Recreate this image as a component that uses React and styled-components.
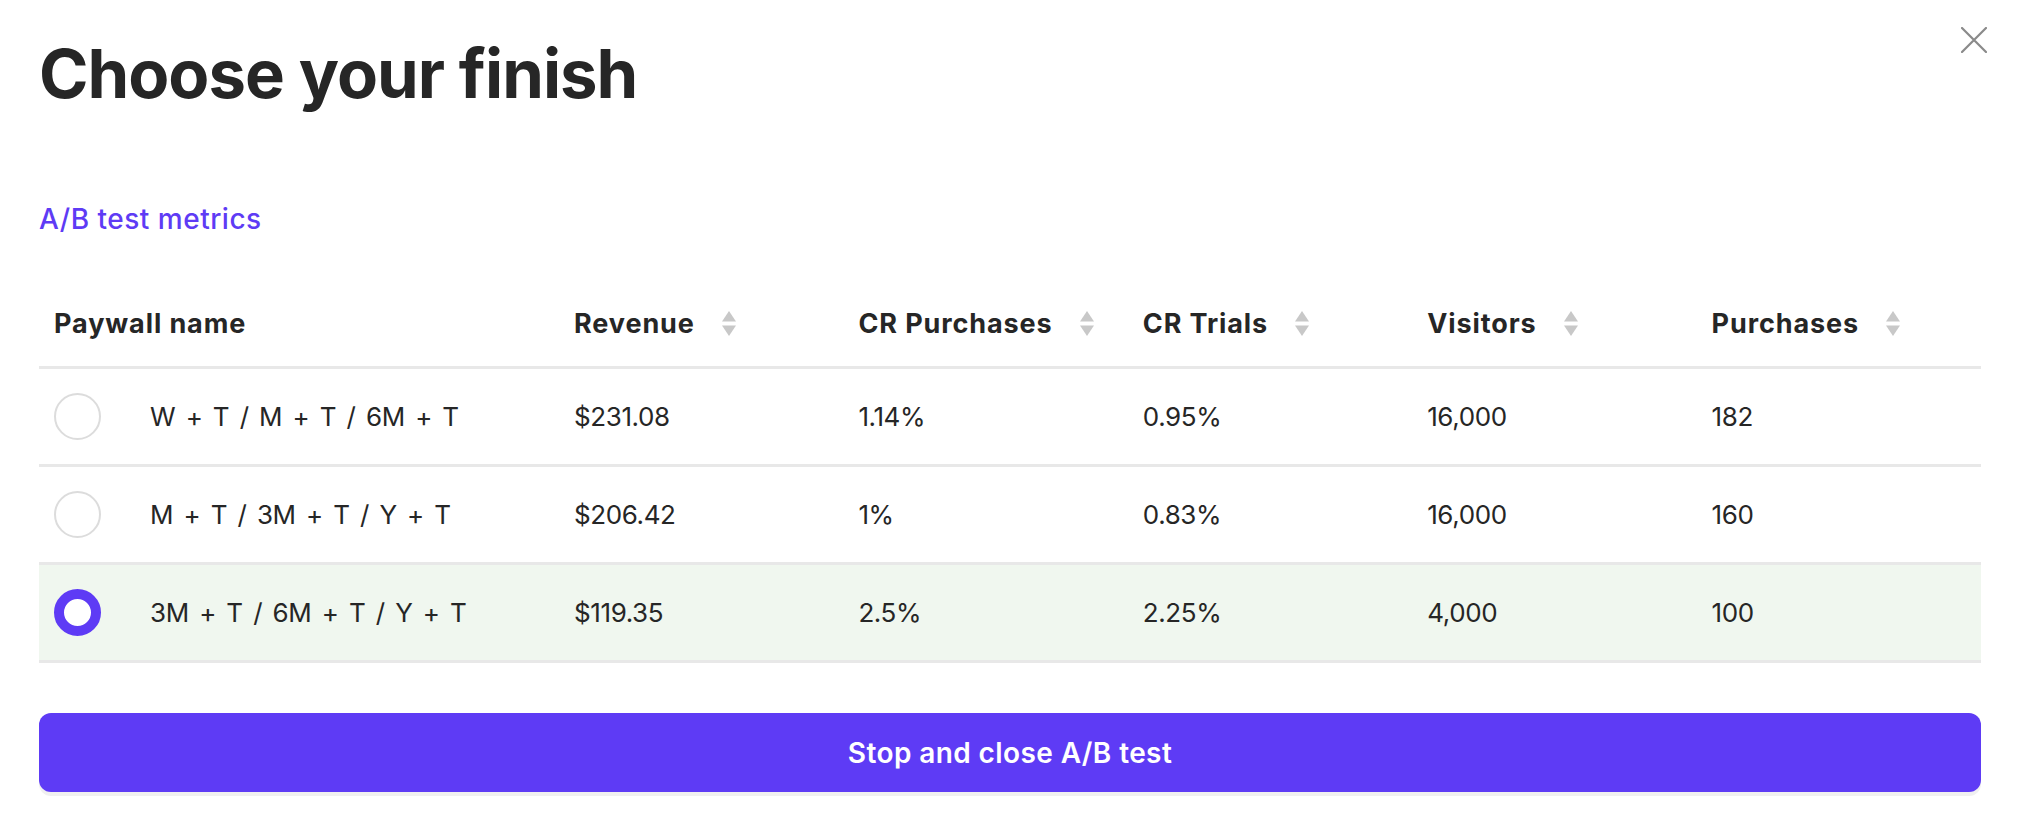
import React, { useState } from "react";
import styled, { createGlobalStyle } from "styled-components";

const GlobalStyle = createGlobalStyle`
  * { box-sizing: border-box; }
  body {
    margin: 0;
    background: #ffffff;
    font-family: "Inter", "Liberation Sans", sans-serif;
    color: #262626;
  }
`;

const columns = [
  { key: "revenue", label: "Revenue" },
  { key: "crPurchases", label: "CR Purchases" },
  { key: "crTrials", label: "CR Trials" },
  { key: "visitors", label: "Visitors" },
  { key: "purchases", label: "Purchases" },
];

const paywalls = [
  {
    id: 1,
    name: "W + T / M + T / 6M + T",
    revenue: "$231.08",
    crPurchases: "1.14%",
    crTrials: "0.95%",
    visitors: "16,000",
    purchases: "182",
  },
  {
    id: 2,
    name: "M + T / 3M + T / Y + T",
    revenue: "$206.42",
    crPurchases: "1%",
    crTrials: "0.83%",
    visitors: "16,000",
    purchases: "160",
  },
  {
    id: 3,
    name: "3M + T / 6M + T / Y + T",
    revenue: "$119.35",
    crPurchases: "2.5%",
    crTrials: "2.25%",
    visitors: "4,000",
    purchases: "100",
  },
];

const SortIcon = () => (
  <SortWrap>
    <svg width="16" height="27" viewBox="0 0 16 27">
      <path d="M8 1 L15 11.5 L1 11.5 Z" fill="#c8c8c8" />
      <path d="M1 15.5 L15 15.5 L8 26 Z" fill="#c8c8c8" />
    </svg>
  </SortWrap>
);

const App = () => {
  const [selected, setSelected] = useState(3);

  return (
    <>
      <GlobalStyle />
      <Modal>
        <CloseButton aria-label="Close">
          <svg width="26" height="26" viewBox="0 0 26 26">
            <path
              d="M1 1 L25 25 M25 1 L1 25"
              stroke="#8a8a8a"
              strokeWidth="2.2"
              strokeLinecap="round"
            />
          </svg>
        </CloseButton>

        <Title>Choose your finish</Title>
        <MetricsLink href="#">A/B test metrics</MetricsLink>

        <Table>
          <HeaderRow>
            <HeadCell>Paywall name</HeadCell>
            {columns.map((col) => (
              <HeadCell key={col.key}>
                {col.label}
                <SortIcon />
              </HeadCell>
            ))}
          </HeaderRow>

          {paywalls.map((p) => (
            <Row
              key={p.id}
              $active={selected === p.id}
              onClick={() => setSelected(p.id)}
            >
              <NameCell>
                <Radio $checked={selected === p.id} />
                <span>{p.name}</span>
              </NameCell>
              {columns.map((col) => (
                <Cell key={col.key}>{p[col.key]}</Cell>
              ))}
            </Row>
          ))}
        </Table>

        <StopButton>Stop and close A/B test</StopButton>
      </Modal>
    </>
  );
};

const Modal = styled.div`
  position: relative;
  padding: 30px 45px 40px 39px;
`;

const CloseButton = styled.button`
  position: absolute;
  top: 27px;
  right: 39px;
  padding: 0;
  border: none;
  background: none;
  cursor: pointer;
  display: flex;
`;

const Title = styled.h1`
  margin: 0;
  font-size: 67px;
  font-weight: 700;
  line-height: 88px;
  letter-spacing: -1px;
  color: #262626;
`;

const MetricsLink = styled.a`
  display: inline-block;
  margin-top: 84px;
  font-size: 28px;
  font-weight: 500;
  line-height: 34px;
  letter-spacing: 0.5px;
  color: #5e3bf5;
  text-decoration: none;
`;

const Table = styled.div`
  margin-top: 45px;
  display: flex;
  flex-direction: column;
`;

const gridCols = `520px repeat(5, 1fr)`;

const HeaderRow = styled.div`
  display: grid;
  grid-template-columns: ${gridCols};
  align-items: center;
  height: 88px;
  border-bottom: 3px solid #e8e8e8;
`;

const HeadCell = styled.div`
  display: flex;
  align-items: center;
  gap: 26px;
  padding-left: 15px;
  font-size: 27px;
  font-weight: 700;
  letter-spacing: 0.9px;
  color: #262626;
`;

const SortWrap = styled.span`
  display: flex;
`;

const Row = styled.div`
  display: grid;
  grid-template-columns: ${gridCols};
  align-items: center;
  height: 98px;
  border-bottom: 3px solid #e8e8e8;
  background: ${(p) => (p.$active ? "#f0f7ef" : "#ffffff")};
  cursor: pointer;
`;

const Cell = styled.div`
  padding-left: 15px;
  font-size: 26px;
  font-weight: 400;
  letter-spacing: -0.4px;
  color: #262626;
`;

const NameCell = styled(Cell)`
  display: flex;
  align-items: center;
  gap: 49px;
  word-spacing: 3.5px;
`;

const Radio = styled.span`
  flex: none;
  width: 47px;
  height: 47px;
  border-radius: 50%;
  background: #ffffff;
  border: ${(p) => (p.$checked ? "10px solid #5e3bf5" : "2px solid #dcdcdc")};
`;

const StopButton = styled.button`
  display: block;
  width: 100%;
  margin-top: 50px;
  height: 79px;
  border: none;
  border-radius: 12px;
  background: #5e3bf5;
  color: #ffffff;
  font-family: "Inter", "Liberation Sans", sans-serif;
  font-size: 28px;
  font-weight: 600;
  letter-spacing: 0.4px;
  box-shadow: 0 4px 0 #f0f0f0;
  cursor: pointer;
`;

export default App;
